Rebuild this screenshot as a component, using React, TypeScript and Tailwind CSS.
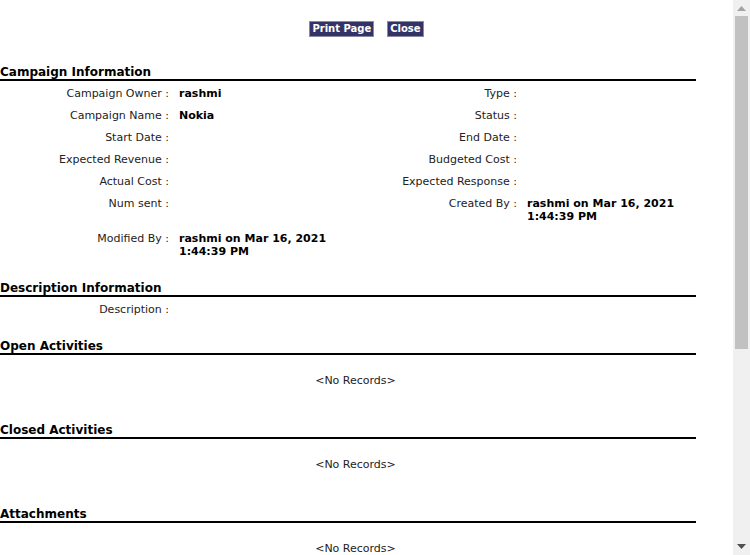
import React from "react";

const font = { fontFamily: '"DejaVu Sans", Verdana, sans-serif' };

function Heading({ children }: { children: React.ReactNode }) {
  return (
    <div className="text-[12px] font-bold leading-[14px] pt-[2px] text-black border-b-2 border-black">
      {children}
    </div>
  );
}

function Row({
  l1,
  v1,
  l2,
  v2,
}: {
  l1: string;
  v1?: React.ReactNode;
  l2?: string;
  v2?: React.ReactNode;
}) {
  return (
    <div className="grid grid-cols-4 py-[4.5px] text-[11px] leading-[13px]">
      <div className="text-right pr-[5px] text-[#222]">{l1} :</div>
      <div className="pl-[5px] font-bold text-black">{v1}</div>
      <div className="text-right pr-[5px] text-[#222]">{l2 ? `${l2} :` : ""}</div>
      <div className="pl-[5px] font-bold text-black">{v2}</div>
    </div>
  );
}

function NoRecords() {
  return (
    <div className="pt-[15px] pb-[29px] pl-[15px] text-center text-[11px] leading-[22px] text-[#222]">
      &lt;No Records&gt;
    </div>
  );
}

export default function App() {
  return (
    <div className="flex h-[555px] w-[750px] overflow-hidden bg-white" style={font}>
      <div className="w-[733px] shrink-0">
        <div className="flex justify-center gap-[13px] pt-[21px]">
          <button className="h-[16px] px-[2px] bg-[#333366] border border-[#8a8aa8] text-white text-[10px] font-bold leading-[14px]">
            Print Page
          </button>
          <button className="h-[16px] px-[2px] bg-[#333366] border border-[#8a8aa8] text-white text-[10px] font-bold leading-[14px]">
            Close
          </button>
        </div>
        <div className="w-[696px] mt-[26px]">
          <Heading>Campaign Information</Heading>
          <div className="mt-[1px]">
            <Row l1="Campaign Owner" v1="rashmi" l2="Type" />
            <Row l1="Campaign Name" v1="Nokia" l2="Status" />
            <Row l1="Start Date" l2="End Date" />
            <Row l1="Expected Revenue" l2="Budgeted Cost" />
            <Row l1="Actual Cost" l2="Expected Response" />
            <Row
              l1="Num sent"
              l2="Created By"
              v2={
                <>
                  rashmi on Mar 16, 2021
                  <br />
                  1:44:39 PM
                </>
              }
            />
            <Row
              l1="Modified By"
              v1={
                <>
                  rashmi on Mar 16, 2021
                  <br />
                  1:44:39 PM
                </>
              }
            />
          </div>
          <div className="mt-[17px]">
            <Heading>Description Information</Heading>
          </div>
          <div className="mt-[1px]">
            <Row l1="Description" />
          </div>
          <div className="mt-[17px]">
            <Heading>Open Activities</Heading>
          </div>
          <NoRecords />
          <Heading>Closed Activities</Heading>
          <NoRecords />
          <Heading>Attachments</Heading>
          <NoRecords />
        </div>
      </div>
      <div className="w-[17px] shrink-0 bg-[#f0f0f0] flex flex-col items-center">
        <svg width="9" height="5" viewBox="0 0 9 5" className="mt-[6px]">
          <polygon points="0,5 9,5 4.5,0" fill="#a3a3a3" />
        </svg>
        <div className="mt-[5px] w-[13px] h-[333px] bg-[#c1c1c1]" />
        <div className="flex-1" />
        <svg width="9" height="5" viewBox="0 0 9 5" className="mb-[6px]">
          <polygon points="0,0 9,0 4.5,5" fill="#505050" />
        </svg>
      </div>
    </div>
  );
}
